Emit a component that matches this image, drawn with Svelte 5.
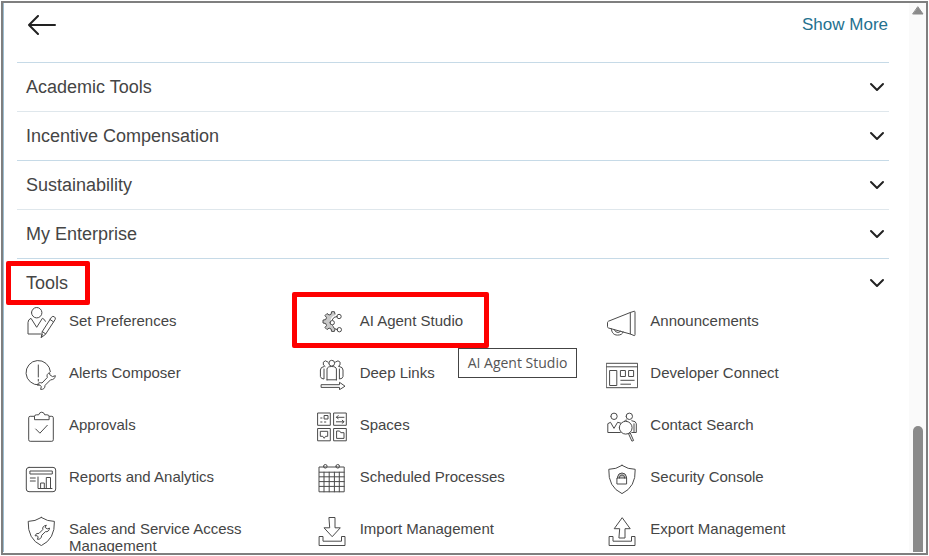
<script>

    const sections = ['Academic Tools', 'Incentive Compensation', 'Sustainability', 'My Enterprise', 'Tools']

    const circle = (x, y, r) => `M${x - r} ${y}a${r} ${r} 0 1 0 ${2 * r} 0a${r} ${r} 0 1 0 ${-2 * r} 0`
    const rect = (x, y, w, h) => `M${x} ${y}h${w}v${h}h${-w}z`

    const tray = 'M3.5 22.5h3.5v4.7h18.5v-4.7h3.5v9h-25.5z'

    const tools = [
        {
            title: 'Set Preferences',
            line: circle(11.7, 6.7, 5.2) + 'M15.5 28H3V16.5q0-3 3-4.2l5.7 9 5.7-9q2.2.7 3 3M16.3 31.2l1-5.7 9.2-14.3q1.3-1.5 2.9-.4t.7 2.8L20.7 28zM17.3 25.5l3.4 2.5M25 13.5l3.3 2.2M16.3 31.2l1-2.7'
        },
        {
            title: 'AI Agent Studio',
            line: 'M19 8l-.6-2.3h-2.8l-.5 2.5-2 .8-2.1-1.5-2 2 1.5 2.1-.8 2-2.7.5v2.9l2.7.5.8 2-1.5 2.1 2 2 2.1-1.5 2 .9.5 2.4h2.8l.6-2.1M16.3 13.6q1.2-3.1 4.5-3.1M16.5 19.7q1.2 3.7 4.7 4' + circle(23, 10.5, 2.2) + circle(16.2, 16.7, 2.2) + circle(23.3, 23.7, 2.2),
            shade: 'M19 8l-.6-2.3h-2.8l-.5 2.5-2 .8-2.1-1.5-2 2 1.5 2.1-.8 2-2.7.5v2.9l2.7.5.8 2-1.5 2.1 2 2 2.1-1.5 2 .9.5 2.4h2.8l.6-3.4q-4.5-.8-4.5-6.3t4.5-6.5z',
            highlight: true,
            tooltip: true
        },
        {
            title: 'Announcements',
            line: 'M24.3 6.5L2.5 15.2q-1 .5-1 1.5v4q0 1 1 1.3L24.3 28V6.5l4-1.3q.7 0 .7.8v22.7q0 1-.8.9L24.3 28M5.3 22.8c.5 3.5 2 6.3 6.2 6.3 3.3 0 5.3-1.2 5.6-3.2M8.2 23.7q1.3 3 4 2.8 2-.2 2.2-1.4'
        },
        {
            title: 'Alerts Composer',
            line: 'M14 26.9A12.2 12.2 0 1 1 25.4 13.6M13.3 7v12M13.3 21.3v1.8M24.3 14.8q-3.2 1.2-2 4.7L17 25q-3.6-1.2-5 2l3 .1 1.3 1.6-.7 2.7q4.3.4 4.5-4.1l5.5-5.5q4 .2 4.8-4.1l-2.9.9-2.4-1.6z'
        },
        {
            title: 'Deep Links',
            line: circle(15.7, 5.2, 2.9) + 'M12 4Q9 1.4 7.3 4.2 6.5 7.5 9 8.5M19.4 4Q22.4 1.4 24.1 4.2 24.9 7.5 22.4 8.5M11 22V11q.3-2.5 4.7-2.5T20.4 11v11M8 8.5Q4.4 9 4.4 12v6.5q.5 2.5 3.6 2.5V11M23.4 8.5Q27 9 27 12v6.5q-.5 2.5-3.6 2.5V11M11 21.8h9.4M5.5 26.7h18v-2.4l5.5 3.9-5.5 3.5v-2.3h-18z'
        },
        {
            title: 'Developer Connect',
            line: rect(.6, 5.3, 31, 24.4) + 'M.6 8.8h31M14.8 22.3h13.4M14.8 26.2h9.8' + rect(4, 12.5, 6.8, 15) + rect(14.8, 12.5, 4.6, 6) + rect(23, 12.5, 4.6, 6)
        },
        {
            title: 'Approvals',
            line: 'M9.5 6.3H5.2q-1.5 0-1.5 1.5v22q0 1.5 1.5 1.5h21.6q1.5 0 1.5-1.5v-22q0-1.5-1.5-1.5h-2.6M9.5 9.3V6.5q0-1.7 2-1.7h2.2q.7-2.6 3-2.6t3 2.6h2.2q2.2 0 2.2 1.7v2.8zM10.7 19l4.2 4.2 7.4-7.9'
        },
        {
            title: 'Spaces',
            line: rect(2, 3, 12.3, 12.3) + rect(18, 3, 12.3, 12.3) + rect(2, 18.5, 12.3, 12.3) + rect(18, 18.5, 12.3, 12.3) + rect(8.5, 5.5, 3.5, 3.5) + 'M4.7 8h1.3M4.7 12h1.3M8.5 12h1.3M28 7.3h-7.6l1.8-1.8M20.4 7.3l1.8 1.4M20.4 11.8H28l-1.8-1.6M28 11.8l-1.8 1.4M4.7 21.3h7v5H9.5l-1.3 2-1.4-2H4.7zM20.6 28v-7h3l1.2 1.7H28V28z'
        },
        {
            title: 'Contact Search',
            line: circle(8, 6.3, 3.2) + circle(23.3, 6.3, 3.2) + circle(19.7, 17.7, 6.4) + 'M14.3 22.5H1.8V13.7l2.7-1.4L8 18.4l3.6-6.1 3 .8M22.8 23.4l1.4-.5 3.4 7.6-1.3.5zM18.5 11q1-1 2-1M25.8 10.7q4.5.5 4.5 3v8.8h-4.5M28 13.8v8.7'
        },
        {
            title: 'Reports and Analytics',
            line: 'M4 5.4h24q2.7 0 2.7 2.6v19q0 2.7-2.7 2.7H4q-2.7 0-2.7-2.7V8Q1.3 5.4 4 5.4zM5.3 16h5M5.3 19h5M13 15v11.5h14' + rect(5.3, 9, 22, 3) + rect(16, 21, 3.3, 5.5) + rect(21.7, 15.5, 3.8, 11)
        },
        {
            title: 'Scheduled Processes',
            line: rect(3.4, 5, 24.8, 24.8) + 'M3.4 10.2h24.8M3.4 14.8h24.8M3.4 19.6h24.8M3.4 24.4h24.8M8 10.2v19.6M13.2 10.2v19.6M18.4 10.2v19.6M23.3 10.2v19.6' + circle(9.3, 4.3, 1.8) + circle(21.7, 4.3, 1.8)
        },
        {
            title: 'Security Console',
            line: 'M16 3.4Q10 7.4 2.8 7.3 2 25 16 31.6 30 25 29.2 7.3 22 7.4 16 3.4zM11.5 16v-1q.7-4 4.5-4t4.5 4v1M13.5 16v-1q.5-2 2.5-2t2.5 2v1' + rect(11.3, 16, 9.3, 6),
            shade: 'M11.5 16v-1q.7-4 4.5-4t4.5 4v1z'
        },
        {
            title: 'Sales and Service Access Management',
            line: 'M16.3 3.5Q10 7.5 3.2 7.4 2.5 25 16.3 31.6 30.1 25 29.4 7.4 22.6 7.5 16.3 3.5zM21 11.3q-4 .7-3.2 4.3L14 19.4q-3-.7-4 2.4l2.2-.1 1 1.3-.8 2.3q4 .3 4.3-4l3.7-3.6q3.5.5 4.2-3.6l-2.4.8-1.8-1.3z'
        },
        {
            title: 'Import Management',
            line: 'M13.3 3.5H19v10.3h5.3L16.2 22.7 8 13.8h5.3z' + tray
        },
        {
            title: 'Export Management',
            line: 'M13.3 24H19v-9.3h5.2L16.2 3.7 8.2 14.7h5.1z' + tray
        }
    ]

    let toolsOpen = true

</script>

<div class="window">
    <main>
        <header>
            <button class="back" aria-label="Back">
                <svg width="28" height="20" viewBox="0 0 28 20">
                    <path d="M10 1L1 10l9 9M1 10h26" />
                </svg>
            </button>
            <a href="./">Show More</a>
        </header>

        {#each sections as section}
            <section>
                <h2>
                    <button on:click={() => { if (section === 'Tools') toolsOpen = !toolsOpen }}>
                        <span class={section === 'Tools' ? 'marked' : ''}>{section}</span>
                        <svg width="16" height="10" viewBox="0 0 16 10">
                            <path d="M2 2l6 6 6-6" />
                        </svg>
                    </button>
                </h2>
            </section>
        {/each}

        {#if toolsOpen}
            <ul>
                {#each tools as tool}
                    <li>
                        <a href="./" class={tool.highlight ? 'highlight' : ''}>
                            <svg width="32" height="32" viewBox="0 0 32 32">
                                {#if tool.shade}
                                    <path class="shade" d={tool.shade} />
                                {/if}
                                <path d={tool.line} />
                            </svg>
                            <span>{tool.title}</span>
                        </a>
                        {#if tool.tooltip}
                            <div class="tooltip" role="tooltip">{tool.title}</div>
                        {/if}
                    </li>
                {/each}
            </ul>
        {/if}
    </main>

    <div class="scrollbar">
        <svg width="12" height="9" viewBox="0 0 12 9">
            <path d="M6 1L11 8H1z" />
        </svg>
        <div class="thumb"></div>
    </div>
</div>

<style>

    :global(body) {
        background-color: white;
        font-family: "Liberation Sans", Arial, sans-serif;
        color: #454545;
    }

    .window {
        box-sizing: border-box;
        height: calc(100vh - 2px);
        margin: 1px;
        padding-bottom: 1px;
        border: 2px solid #7f7f7f;
        display: flex;
        overflow: hidden;
    }

    main {
        flex: 1;
        min-width: 0;
        padding: 0 20px 0 13px;
        border-left: 1px solid #9dbdd0;
        overflow: hidden;
    }

    a {
        text-decoration: none;
        color: inherit;
    }

    button {
        padding: 0;
        border: 0;
        background: none;
        font: inherit;
        color: inherit;
        cursor: pointer;
    }

    svg {
        display: block;
        flex: none;
        fill: none;
        stroke: #222;
        stroke-width: 2;
        stroke-linecap: round;
        stroke-linejoin: round;
    }

    header {
        box-sizing: border-box;
        height: 59px;
        padding: 12px 1px 0 11px;
        display: flex;
        justify-content: space-between;
        align-items: flex-start;
    }

    header a {
        font-size: 17px;
        line-height: 20px;
        color: #24718f;
    }

    section {
        border-top: 1px solid #dfe7ec;
    }

    section:nth-of-type(odd) {
        border-top-color: #c6dae7;
    }

    h2 {
        margin: 0;
        font-size: 18px;
        font-weight: normal;
    }

    h2 button {
        width: 100%;
        height: 48px;
        padding: 0 4px 0 9px;
        display: flex;
        justify-content: space-between;
        align-items: center;
    }

    .marked,
    .highlight {
        position: relative;
    }

    .marked::after,
    .highlight::after {
        content: '';
        position: absolute;
        border: 5px solid #fe0000;
        border-radius: 2px;
    }

    .marked::after {
        inset: -12px -22px -11px -20px;
    }

    .highlight::after {
        inset: -14px -26px -10px -24px;
    }

    ul {
        margin: -1px 0 0;
        padding: 0;
        list-style: none;
        display: grid;
        grid-template-columns: repeat(3, 1fr);
        row-gap: 20px;
        font-size: 15px;
        line-height: 17px;
    }

    li {
        position: relative;
        height: 32px;
        padding: 0 24px 0 8px;
    }

    li a {
        display: inline-flex;
        gap: 12px;
    }

    li a span {
        padding-top: 6px;
    }

    li svg {
        stroke: #4a4a4a;
        stroke-width: 1;
    }

    .shade {
        fill: #c9c9c9;
        stroke: none;
    }

    .tooltip {
        position: absolute;
        top: 42px;
        left: 150px;
        z-index: 1;
        padding: 5px 9px;
        border: 1px solid #444;
        background-color: white;
        font-family: "Open Sans", "Noto Sans", sans-serif;
        font-size: 14px;
        line-height: 18px;
        white-space: nowrap;
        color: #555;
    }

    .scrollbar {
        width: 17px;
        padding-top: 3px;
        background-color: #fafafa;
        display: flex;
        flex-direction: column;
        justify-content: space-between;
        align-items: center;
    }

    .scrollbar svg {
        fill: #8a8a8a;
        stroke: #8a8a8a;
        stroke-width: 1;
    }

    .thumb {
        width: 10px;
        height: 23%;
        border-radius: 5px 5px 0 0;
        background-color: #8a8a8a;
    }

</style>
